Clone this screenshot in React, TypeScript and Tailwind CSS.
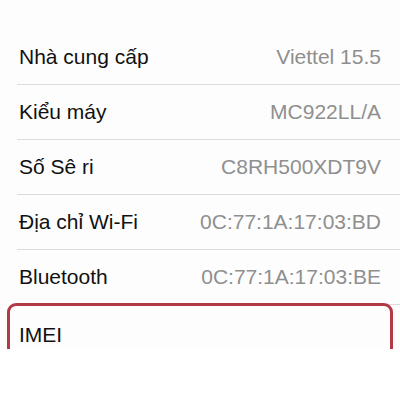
const rows = [
  { label: "Nhà cung cấp", value: "Viettel 15.5" },
  { label: "Kiểu máy", value: "MC922LL/A" },
  { label: "Số Sê ri", value: "C8RH500XDT9V" },
  { label: "Địa chỉ Wi-Fi", value: "0C:77:1A:17:03:BD" },
  { label: "Bluetooth", value: "0C:77:1A:17:03:BE" },
];

export default function App() {
  return (
    <div className="h-[400px] w-[400px] overflow-hidden bg-white font-['Liberation_Sans',Arial,sans-serif] text-[21px]">
      <div className="h-[349px] overflow-hidden bg-[#fdfdfd] pt-[30px]">
        {rows.map((row) => (
          <div key={row.label} className="ml-[17px] flex h-[55px] items-center justify-between border-b border-[#dcdcdc] pr-[19px] pl-[2px]">
            <span className="text-[#111]">{row.label}</span>
            <span className="text-[#8f8f8f]">{row.value}</span>
          </div>
        ))}
        <div className="mx-[7px] mt-[-2px] h-[80px] rounded-[9px] border-[3px] border-[#b23a46] pt-[13px] pl-[9px]">
          <span className="text-[#111]">IMEI</span>
        </div>
      </div>
    </div>
  );
}
